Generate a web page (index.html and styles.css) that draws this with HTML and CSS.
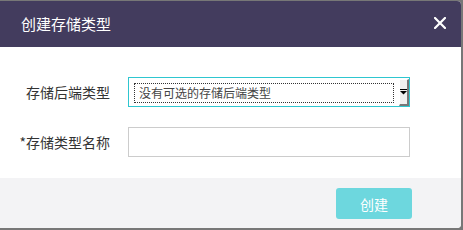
FILE: index.html
```html
<!DOCTYPE html>
<html>
<head>
<meta charset="utf-8">
<link rel="stylesheet" href="styles.css">
</head>
<body>
<div class="dialog">
  <div class="header">
    <span class="title">创建存储类型</span>
    <span class="close">
      <svg width="12" height="12" viewBox="0 0 12 12"><path d="M1 1 L11 11 M11 1 L1 11" stroke="#fff" stroke-width="2.2" stroke-linecap="square"/></svg>
    </span>
  </div>
  <div class="body">
    <div class="row">
      <label class="label">存储后端类型</label>
      <div class="select">
        <span class="select-text">没有可选的存储后端类型</span>
        <span class="select-btn">
          <svg width="7" height="6" viewBox="0 0 7 6"><rect x="0" y="0" width="7" height="1" fill="#000"/><path d="M0 2 H7 L3.5 5.5 Z" fill="#000"/></svg>
        </span>
      </div>
    </div>
    <div class="row">
      <label class="label">*存储类型名称</label>
      <div class="input"></div>
    </div>
  </div>
  <div class="footer">
    <button class="btn">创建</button>
  </div>
</div>
</body>
</html>
```
FILE: styles.css
```css
html, body {
  margin: 0;
  padding: 0;
}
body {
  background: #777777;
  width: 463px;
  height: 230px;
  overflow: hidden;
  font-family: "Noto Sans CJK SC", "Noto Sans", sans-serif;
}
.dialog {
  margin-top: 1px;
  width: 461px;
  height: 227px;
  background: #fff;
  border-radius: 0 4px 4px 0;
  overflow: hidden;
  display: flex;
  flex-direction: column;
}
.header {
  height: 46px;
  background: #433c5e;
  display: flex;
  align-items: center;
  justify-content: space-between;
  padding: 0 15px 0 21px;
}
.title {
  color: #fff;
  font-size: 15px;
  line-height: 20px;
}
.close {
  display: flex;
  margin-top: -3px;
}
.body {
  flex: 1;
  padding: 30px 0 0 0;
  display: flex;
  flex-direction: column;
  gap: 20px;
}
.row {
  display: flex;
  align-items: center;
  height: 30px;
}
.label {
  width: 110px;
  text-align: right;
  font-size: 14px;
  color: #333;
  margin-right: 18px;
}
.select {
  box-sizing: border-box;
  width: 282px;
  height: 30px;
  border: 1px solid #2ec6d0;
  display: flex;
  align-items: center;
  padding: 1px 0 0 5px;
}
.select-text {
  flex: 1;
  height: 18px;
  border: 1px dotted #333;
  font-size: 12px;
  line-height: 18px;
  color: #444;
  padding-left: 4px;
  margin-right: 5px;
}
.select-btn {
  box-sizing: border-box;
  width: 10px;
  height: 27px;
  margin-top: 0;
  align-self: flex-end;
  background: #efefef;
  border-right: 2px solid #777;
  border-bottom: 2px solid #777;
  border-left: 1px solid #fff;
  border-top: 1px solid #fff;
  display: flex;
  align-items: center;
  justify-content: center;
}
.input {
  box-sizing: border-box;
  width: 282px;
  height: 30px;
  border: 1px solid #cccccc;
}
.footer {
  height: 50px;
  background: #f3f3f5;
  display: flex;
  justify-content: flex-end;
  align-items: flex-start;
  padding: 10px 49px 0 0;
  box-sizing: border-box;
}
.btn {
  width: 76px;
  height: 31px;
  border: none;
  border-radius: 3px;
  background: #6dd7de;
  color: #fff;
  font-family: "Noto Sans CJK SC", sans-serif;
  font-size: 14px;
  padding: 0;
}
```
